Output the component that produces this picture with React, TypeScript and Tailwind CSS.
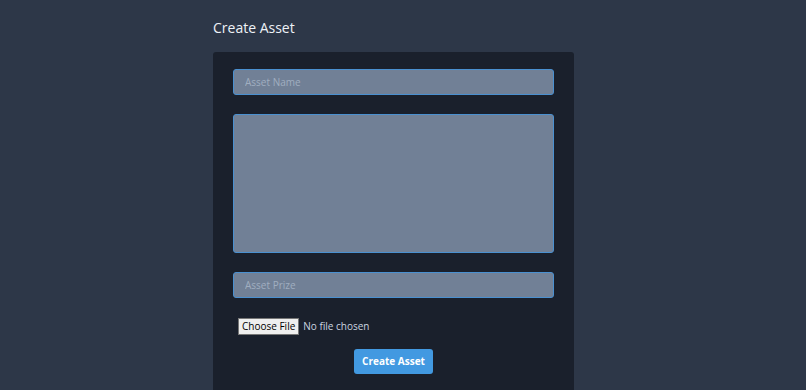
export default function App() {
  return (
    <div className="min-h-[390px] bg-[#2d3748] font-['Open_Sans',sans-serif]">
      <div className="ml-[213px] w-[361px] pt-[17px]">
        <h1 className="text-[14px] leading-[22px] text-[#edf2f7]">Create Asset</h1>
        <form className="mt-[13px] rounded-t-[3px] bg-[#1a202c] px-5 pt-[17px] pb-4">
          <input
            type="text"
            placeholder="Asset Name"
            className="block h-[26px] w-full rounded-[3px] border border-[#4a90d0] bg-[#718096] px-[11px] text-[10px] text-white placeholder-[#a0aec0] outline-none"
          />
          <textarea
            className="mt-[19px] block h-[139px] w-full resize-none rounded-[3px] border border-[#4a90d0] bg-[#718096] px-[11px] py-2 text-[10px] text-white outline-none"
          />
          <input
            type="text"
            placeholder="Asset Prize"
            className="mt-[19px] block h-[26px] w-full rounded-[3px] border border-[#4a90d0] bg-[#718096] px-[11px] text-[10px] text-white placeholder-[#a0aec0] outline-none"
          />
          <div className="mt-[20px] flex h-[17px] items-center pl-[5px]">
            <input
              type="file"
              className="text-[10px] leading-[15px] text-[#cbd5e0] file:mr-[4px] file:h-[17px] file:border file:border-[#767676] file:bg-[#efefef] file:px-[3px] file:py-0 file:text-[10px] file:text-black"
            />
          </div>
          <div className="mt-[14px] flex justify-center">
            <button
              type="button"
              className="h-[25px] w-[79px] rounded-[3px] bg-[#4299e1] text-[10px] font-bold text-white"
            >
              Create Asset
            </button>
          </div>
        </form>
      </div>
    </div>
  )
}
